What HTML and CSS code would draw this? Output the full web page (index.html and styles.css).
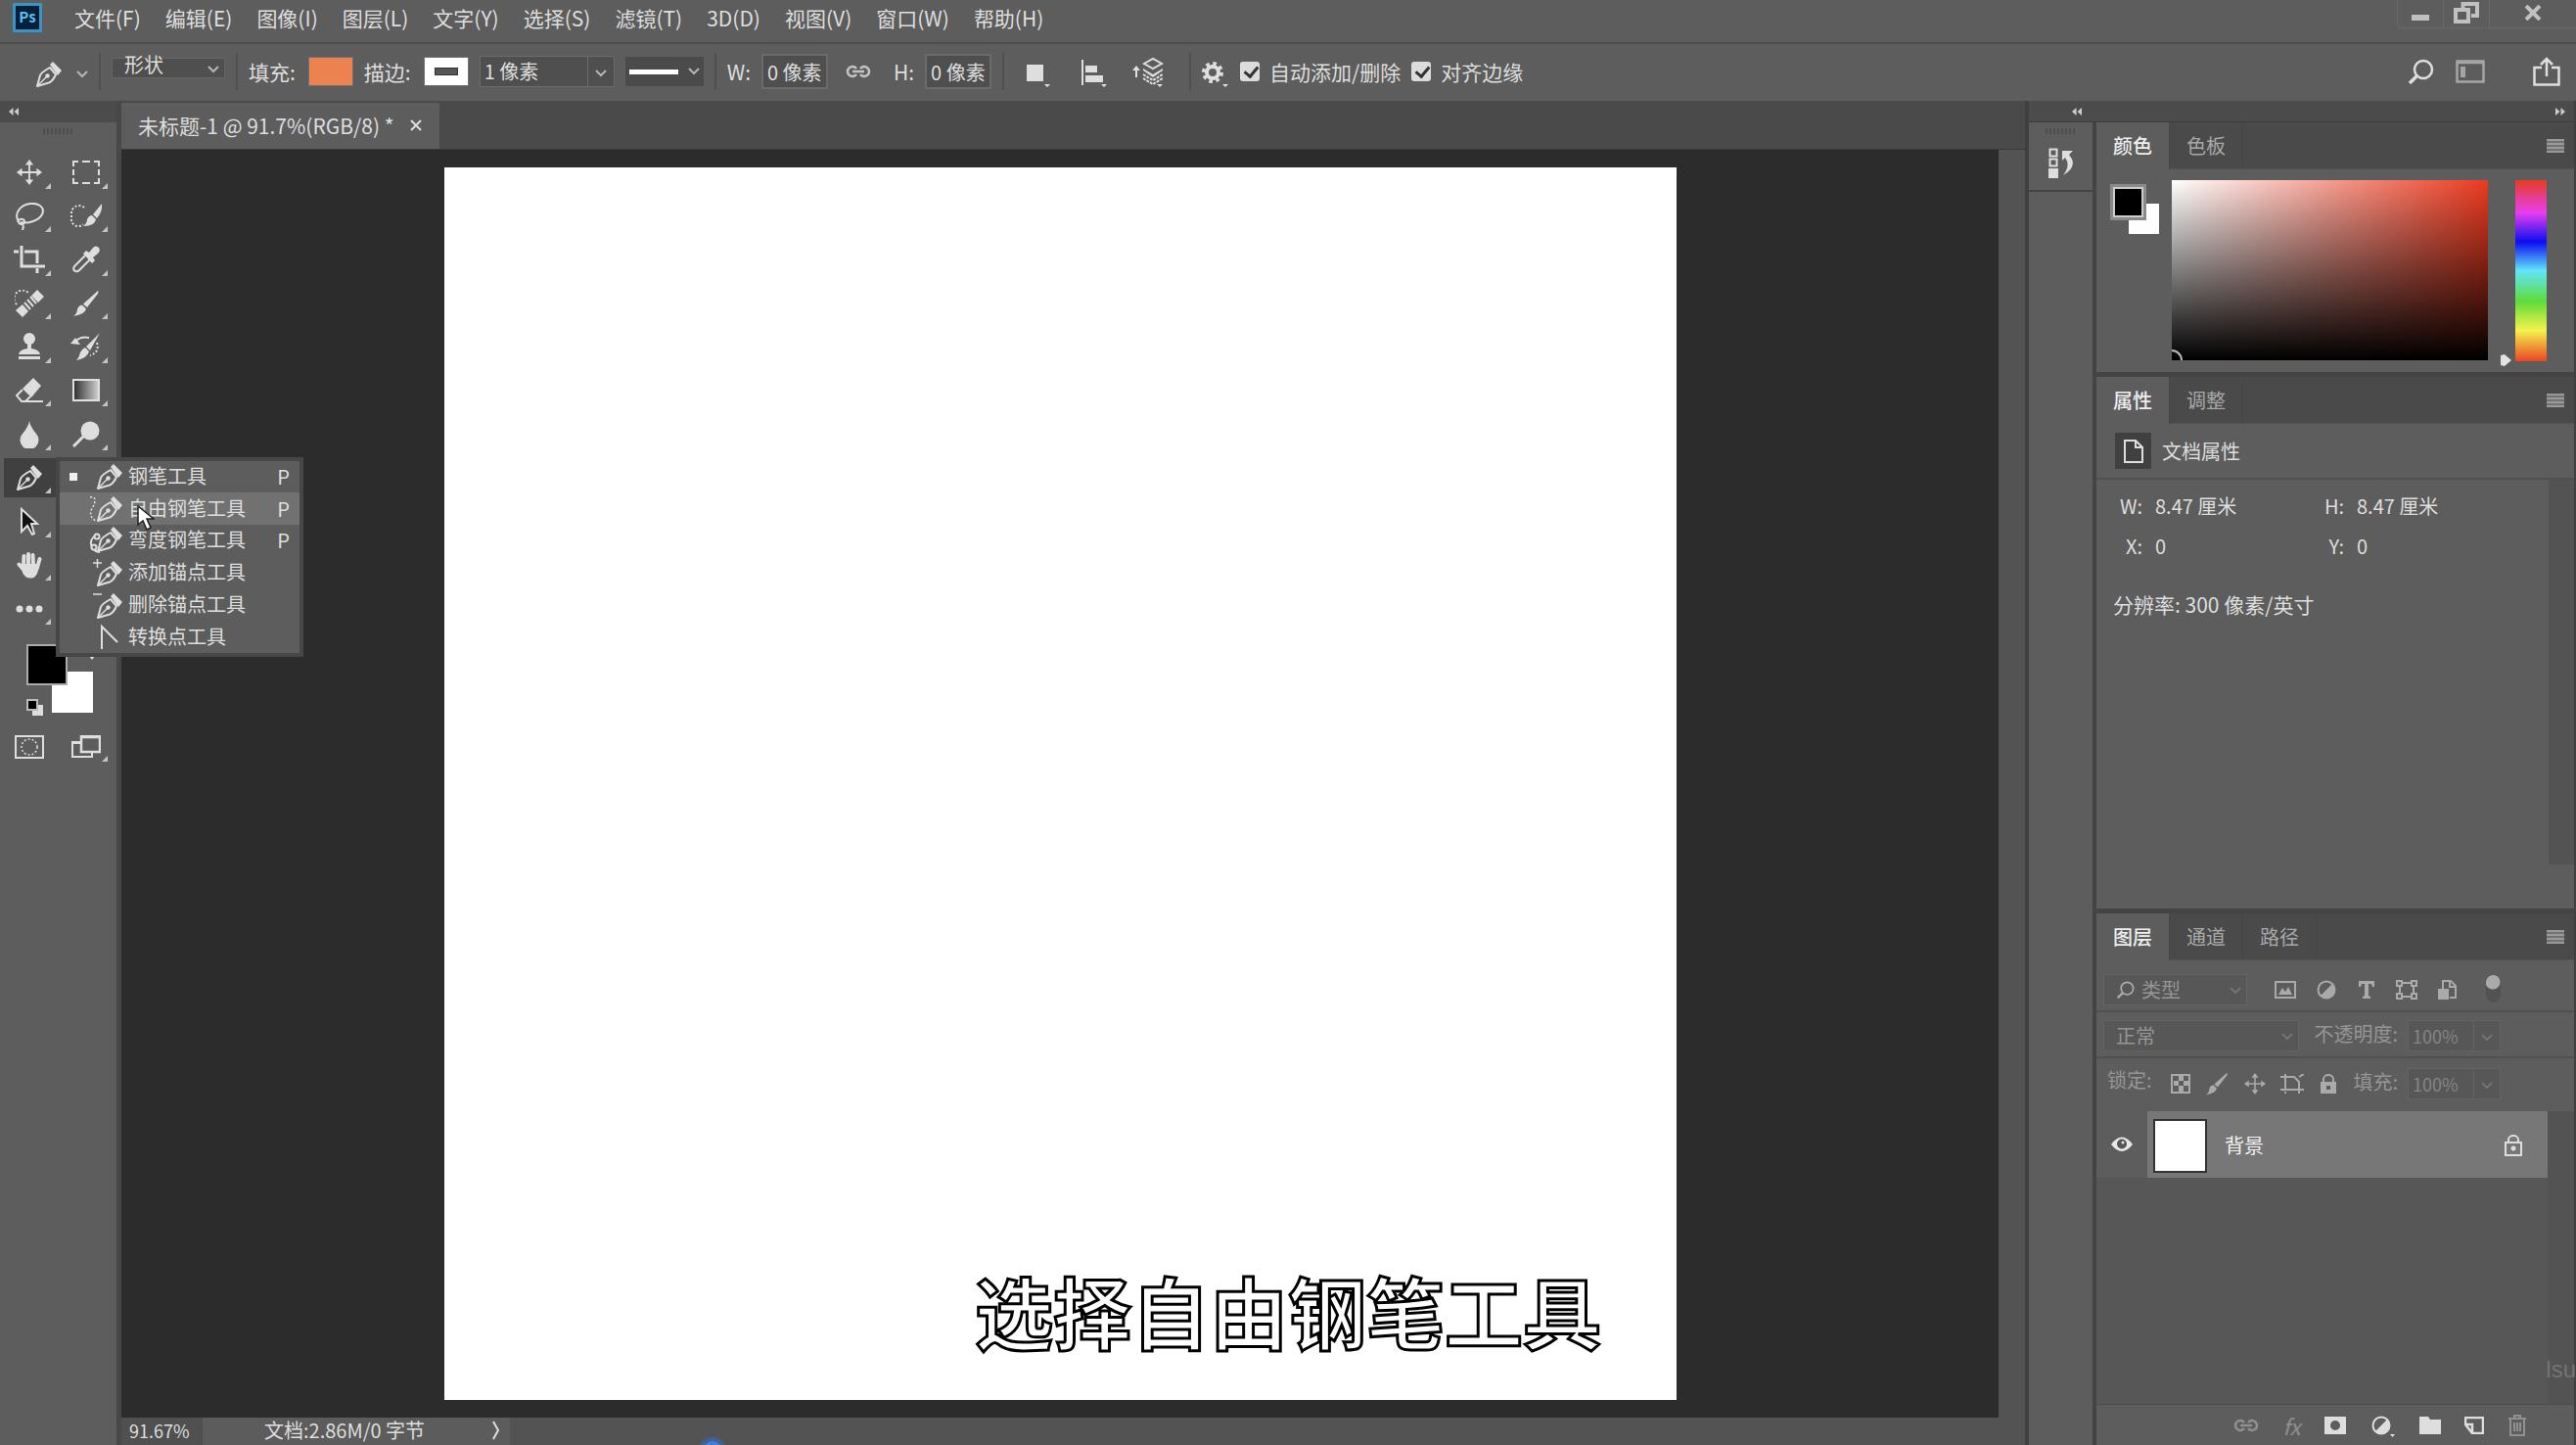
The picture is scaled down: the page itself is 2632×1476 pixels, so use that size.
FILE: index.html
```html
<!DOCTYPE html>
<html lang="zh-CN">

<head>
    <meta charset="UTF-8">
    <meta name="viewport" content="width=device-width, initial-scale=1.0">
    <title>未标题-1</title>
    <link rel="stylesheet" href="styles.css">
</head>

<body>
    <!-- icon sprite -->
    <svg class="sprite" aria-hidden="true">
        <symbol id="pen" viewBox="0 0 26 26">
            <path d="M1 25L4 14Q5 11 14 6L20 13Q17 20 13 21.500Z" fill="none" stroke="currentColor" stroke-width="2" stroke-linejoin="round" />
            <path d="M1 25L11 15" stroke="currentColor" stroke-width="1.500" />
            <circle cx="11.500" cy="14.500" r="2.200" fill="currentColor" />
            <path d="M14 3L17 0L26 9L22 14Z" fill="currentColor" />
        </symbol>
        <symbol id="chevron" viewBox="0 0 12 8">
            <path d="M1 1L6 6L11 1" fill="none" stroke="currentColor" stroke-width="2" />
        </symbol>
        <symbol id="chain" viewBox="0 0 26 14">
            <path d="M11 4A5 5 0 1 0 11 10M15 4A5 5 0 1 1 15 10M7 7H19" fill="none" stroke="currentColor" stroke-width="2.500" />
        </symbol>
        <symbol id="move" viewBox="0 0 28 28">
            <path d="M14 4V24M4 14H24" stroke="currentColor" stroke-width="2" />
            <path d="M14 0L18.500 6H9.500ZM14 28L18.500 22H9.500ZM0 14L6 9.500V18.500ZM28 14L22 9.500V18.500Z" fill="currentColor" />
        </symbol>
        <symbol id="brush" viewBox="0 0 28 28">
            <path d="M26 1Q27 1 26 4L15 18L11 14.500Z" fill="currentColor" />
            <path d="M10 15.500L14 19.500Q13 25 1 27Q5 24 5 20Q6 16 10 15.500Z" fill="currentColor" />
        </symbol>
        <symbol id="search" viewBox="0 0 26 26">
            <circle cx="15" cy="11" r="9" fill="none" stroke="currentColor" stroke-width="2.500" />
            <path d="M9 17L1 25" stroke="currentColor" stroke-width="3.500" />
        </symbol>
        <symbol id="lines" viewBox="0 0 18 14">
            <path d="M0 1H18M0 5H18M0 9H18M0 13H18" stroke="currentColor" stroke-width="3" />
        </symbol>
        <symbol id="half" viewBox="0 0 20 20">
            <circle cx="10" cy="10" r="8.500" fill="none" stroke="currentColor" stroke-width="2" />
            <path d="M16 4A8.500 8.500 0 0 1 4 16Z" fill="currentColor" />
        </symbol>
        <symbol id="collapse" viewBox="0 0 10 8">
            <path d="M4.500 0V8L0 4ZM10 0V8L5.500 4Z" fill="currentColor" />
        </symbol>
    </svg>

    <header class="menubar">
        <svg class="logo" viewBox="0 0 30 30" role="img" aria-label="Ps">
            <rect x="1.500" y="1.500" width="27" height="27" fill="#05203c" stroke="#3b93c0" stroke-width="3" />
            <text x="15" y="20" text-anchor="middle">Ps</text>
        </svg>
        <nav class="menus">
            <button>文件(F)</button>
            <button>编辑(E)</button>
            <button>图像(I)</button>
            <button>图层(L)</button>
            <button>文字(Y)</button>
            <button>选择(S)</button>
            <button>滤镜(T)</button>
            <button>3D(D)</button>
            <button>视图(V)</button>
            <button>窗口(W)</button>
            <button>帮助(H)</button>
        </nav>
        <div class="window-buttons">
            <button aria-label="最小化"><svg width="18" height="20" viewBox="0 0 18 20"><path d="M0 12H18V18H0Z" fill="currentColor" /></svg></button>
            <button aria-label="还原"><svg width="26" height="22" viewBox="0 0 26 22"><path d="M9.500 7V2H24V14H18" fill="none" stroke="currentColor" stroke-width="4" /><path d="M2 8H15V20H2Z" fill="none" stroke="currentColor" stroke-width="4" /></svg></button>
            <button class="close" aria-label="关闭"><svg width="18" height="16" viewBox="0 0 18 16"><path d="M2 1L16 15M16 1L2 15" stroke="currentColor" stroke-width="4" /></svg></button>
        </div>
    </header>

    <div class="options">
        <button class="tool-preset" aria-label="钢笔工具">
            <svg width="26" height="26"><use href="#pen" /></svg>
            <svg width="12" height="8"><use href="#chevron" /></svg>
        </button>
        <span class="sep"></span>
        <span class="select mode">
            <select aria-label="工具模式"><option>形状</option></select>
            <svg width="12" height="8"><use href="#chevron" /></svg>
        </span>
        <span class="sep"></span>
        <label for="fill">填充:</label>
        <button id="fill" class="swatch orange" aria-label="填充"></button>
        <label for="stroke">描边:</label>
        <button id="stroke" class="swatch white" aria-label="描边"><i></i></button>
        <span class="combo">
            <input type="text" value="1 像素" aria-label="描边宽度">
            <button aria-label="描边宽度列表"><svg width="12" height="8"><use href="#chevron" /></svg></button>
        </span>
        <button class="line-type" aria-label="描边类型"><i></i><svg width="12" height="8"><use href="#chevron" /></svg></button>
        <span class="sep"></span>
        <label for="w">W:</label>
        <input class="size" id="w" type="text" value="0 像素">
        <button class="link" aria-label="链接"><svg width="26" height="14"><use href="#chain" /></svg></button>
        <label for="h">H:</label>
        <input class="size" id="h" type="text" value="0 像素">
        <span class="sep"></span>
        <div class="path-buttons">
            <button aria-label="路径操作"><svg width="32" height="32" viewBox="0 0 32 32"><path d="M4 9H21V26H4ZM22 29H28L25 32Z" fill="currentColor" /></svg></button>
            <button aria-label="对齐"><svg width="32" height="32" viewBox="0 0 32 32"><path d="M4 4H6V30H4ZM8 10H20V17H8ZM8 20H26V27H8ZM24 29H30L27 32Z" fill="currentColor" /></svg></button>
            <button aria-label="排列"><svg width="32" height="32" viewBox="0 0 32 32">
                <path d="M0 15L4 10L8 15H5V22H3V15Z" fill="currentColor" />
                <path d="M12 8L21 3L30 8L21 13Z" fill="none" stroke="currentColor" stroke-width="2" />
                <path d="M11 13L21 19L31 13V15L21 22L11 15Z" fill="currentColor" />
                <path d="M11 19L21 25L31 19M11 23L21 29L31 23" fill="none" stroke="currentColor" stroke-width="2" stroke-dasharray="3 1" />
                <path d="M25 29H31L28 32Z" fill="currentColor" />
            </svg></button>
        </div>
        <span class="sep"></span>
        <button class="gear" aria-label="设置"><svg width="28" height="32" viewBox="0 0 28 32">
            <circle cx="11" cy="17" r="6" fill="none" stroke="currentColor" stroke-width="4" />
            <circle cx="11" cy="17" r="9" fill="none" stroke="currentColor" stroke-width="4" stroke-dasharray="3.500 3.570" />
            <path d="M21 29H27L24 32Z" fill="currentColor" />
        </svg></button>
        <label class="check"><input type="checkbox" checked>自动添加/删除</label>
        <label class="check"><input type="checkbox" checked>对齐边缘</label>
        <div class="options-right">
            <button aria-label="搜索"><svg width="26" height="26"><use href="#search" /></svg></button>
            <button class="dim" aria-label="工作区"><svg width="30" height="24" viewBox="0 0 30 24"><path d="M1.500 1.500H28.500V22.500H1.500ZM1 3H29" fill="none" stroke="currentColor" stroke-width="2.500" /><path d="M5 7H10V18H5Z" fill="currentColor" /></svg></button>
            <button aria-label="共享"><svg width="28" height="30" viewBox="0 0 28 30"><path d="M9 11H1.500V28.500H26.500V11H19M14 20V2M8 8L14 2L20 8" fill="none" stroke="currentColor" stroke-width="2.500" /></svg></button>
        </div>
    </div>

    <main class="workspace">
        <aside class="toolbar">
            <div class="strip"><svg width="10" height="8"><use href="#collapse" /></svg></div>
            <div class="grip"></div>
            <div class="tools">
                <button class="tool" aria-label="移动工具"><svg width="26" height="26"><use href="#move" /></svg></button>
                <button class="tool" aria-label="选框工具"><svg width="28" height="24" viewBox="0 0 28 24"><path d="M1 6V1H6M10 1H18M22 1H27V6M27 9V15M27 18V23H22M18 23H10M6 23H1V18M1 15V9" fill="none" stroke="currentColor" stroke-width="2" /></svg></button>
                <button class="tool" aria-label="套索工具"><svg width="30" height="28" viewBox="0 0 30 28"><path d="M4 19C-1 12 5 2 16 1C26 0 31 6 28 12C25 18 14 22 6 20M4 19A3 3 0 1 0 10 19C9 16 4 16 3 20M7 21Q10 23 8 28" fill="none" stroke="currentColor" stroke-width="2" /></svg></button>
                <button class="tool" aria-label="快速选择工具"><svg width="32" height="28" viewBox="0 0 32 28"><path d="M14 5A8 8 0 0 0 1 9V18A7 7 0 0 0 13 22" fill="none" stroke="currentColor" stroke-width="2" stroke-dasharray="2 2" /><path d="M32 1Q33 9 27 16L23 12ZM22 13L26 17Q25 24 13 24Q17 21 17 17Q19 13 22 13Z" fill="currentColor" /></svg></button>
                <button class="tool" aria-label="裁剪工具"><svg width="32" height="28" viewBox="0 0 32 28"><path d="M8 0V21H32M0 6H5M11 6H24V18M24 23V28" fill="none" stroke="currentColor" stroke-width="3" /></svg></button>
                <button class="tool" aria-label="吸管工具"><svg width="28" height="28" viewBox="0 0 28 28"><path d="M13 10L2 21Q0 25 3 26Q5 27 7 25L18 14" fill="none" stroke="currentColor" stroke-width="2" /><path d="M11 8L14 5L17 7L21 2Q24-1 27 2Q29 5 26 8L21 12L23 15L20 18Z" fill="currentColor" /></svg></button>
                <button class="tool" aria-label="修复画笔工具"><svg width="30" height="28" viewBox="0 0 30 28"><path d="M2 15A8 8 0 0 1 14 3" fill="none" stroke="currentColor" stroke-width="2" stroke-dasharray="2 2" /><path d="M23 0L30 7L24 13L17 6ZM8 15L14 22L8 28L1 21Z" fill="currentColor" /><path d="M16 7L22 14M13 10L19 17M10 13L16 20" stroke="currentColor" stroke-width="2" /></svg></button>
                <button class="tool" aria-label="画笔工具"><svg width="28" height="28"><use href="#brush" /></svg></button>
                <button class="tool" aria-label="仿制图章工具"><svg width="24" height="28" viewBox="0 0 24 28"><circle cx="12" cy="6" r="6" fill="currentColor" /><path d="M10 10H14V16Q22 17 23 22H1Q2 17 10 16ZM1 24H23V27H1Z" fill="currentColor" /></svg></button>
                <button class="tool" aria-label="历史记录画笔工具"><svg width="32" height="28" viewBox="0 0 32 28"><path d="M30 0L20 18L16 14ZM15 15L19 19Q17 26 6 28Q9 25 10 20Q12 16 15 15ZM0 11L5 5L10 12Z" fill="currentColor" /><path d="M6 8Q11 3 19 5" fill="none" stroke="currentColor" stroke-width="2" /><path d="M27 10Q30 20 20 23" fill="none" stroke="currentColor" stroke-width="2" stroke-dasharray="2 2" /></svg></button>
                <button class="tool" aria-label="橡皮擦工具"><svg width="28" height="26" viewBox="0 0 28 26"><path d="M18 0L26 8L16 20L7 11Z" fill="currentColor" /><path d="M7 12L1 18L6 24H10L15 19M6 24H28" fill="none" stroke="currentColor" stroke-width="2" /></svg></button>
                <button class="tool" aria-label="渐变工具"><span class="gradient-icon"></span></button>
                <button class="tool" aria-label="模糊工具"><svg width="20" height="28" viewBox="0 0 20 28"><path d="M10 0Q11 6 17 13A9.500 9.500 0 1 1 3 13Q9 6 10 0Z" fill="currentColor" /></svg></button>
                <button class="tool" aria-label="减淡工具"><svg width="28" height="28" viewBox="0 0 28 28"><circle cx="18" cy="10" r="9.500" fill="currentColor" /><path d="M12 15L1 26" stroke="currentColor" stroke-width="3" /></svg></button>
                <div class="tool-slot">
                    <button class="tool active" aria-label="钢笔工具"><svg width="26" height="26"><use href="#pen" /></svg></button>
                    <ul class="flyout">
                        <li><i class="mark"></i><svg width="34" height="28" viewBox="0 0 34 28"><use href="#pen" x="8" y="1" width="26" height="26" /></svg><span>钢笔工具</span><kbd>P</kbd></li>
                        <li class="hover"><i></i><svg width="34" height="28" viewBox="0 0 34 28"><path d="M1 2Q6 1 6 5Q6 9 3 13Q-1 22 7 26" fill="none" stroke="currentColor" stroke-dasharray="2 2" stroke-width="1.500" /><use href="#pen" x="8" y="1" width="26" height="26" /></svg><span>自由钢笔工具</span><kbd>P</kbd></li>
                        <li><i></i><svg width="34" height="28" viewBox="0 0 34 28"><path d="M8 8Q1 12 2 18Q3 25 11 26" fill="none" stroke="currentColor" stroke-width="2" /><circle cx="8" cy="10" r="2.500" fill="#5d5d5d" stroke="currentColor" stroke-width="2" /><circle cx="5" cy="21" r="2.500" fill="#5d5d5d" stroke="currentColor" stroke-width="2" /><use href="#pen" x="8" y="0" width="26" height="26" /></svg><span>弯度钢笔工具</span><kbd>P</kbd></li>
                        <li><i></i><svg width="34" height="28" viewBox="0 0 34 28"><path d="M4 4H13M8.500 0V9" stroke="currentColor" stroke-width="1.500" /><use href="#pen" x="8" y="2" width="26" height="26" /></svg><span>添加锚点工具</span><kbd></kbd></li>
                        <li><i></i><svg width="34" height="28" viewBox="0 0 34 28"><path d="M4 3H13" stroke="currentColor" stroke-width="1.500" /><use href="#pen" x="8" y="2" width="26" height="26" /></svg><span>删除锚点工具</span><kbd></kbd></li>
                        <li><i></i><svg width="34" height="28" viewBox="0 0 34 28"><path d="M13 26V3L29 19" fill="none" stroke="currentColor" stroke-width="2" /></svg><span>转换点工具</span><kbd></kbd></li>
                    </ul>
                    <svg class="pointer" width="18" height="26" viewBox="0 0 18 26"><path d="M1 1V20L6 16L10 25L14 23L10 14H17Z" fill="#fff" stroke="#222" stroke-width="1.500" /></svg>
                </div>
                <button class="tool" aria-label="路径选择工具"><svg width="20" height="30" viewBox="0 0 20 30"><path d="M2 2V25L8 19L13 28L15 27L12 17H18Z" fill="#111" stroke="currentColor" stroke-width="2" /></svg></button>
                <button class="tool" aria-label="抓手工具"><svg width="26" height="28" viewBox="0 0 26 28"><path d="M7 15L7.500 5M12 14V3M17 14L16.500 4M23.500 8L21 17M2.500 13.500L8 20" stroke="currentColor" stroke-width="4" stroke-linecap="round" /><path d="M5 13H23Q22 27 15 27.500Q9 28 6 22Z" fill="currentColor" /></svg></button>
                <button class="tool" aria-label="编辑工具栏"><svg width="28" height="8" viewBox="0 0 28 8"><circle cx="4" cy="4" r="3.500" fill="currentColor" /><circle cx="14" cy="4" r="3.500" fill="currentColor" /><circle cx="24" cy="4" r="3.500" fill="currentColor" /></svg></button>
            </div>
            <div class="color-chips">
                <span class="chip back"></span>
                <span class="chip front"></span>
                <svg class="defaults" width="18" height="18" viewBox="0 0 18 18"><path d="M6 6H17V17H6Z" fill="#ddd" /><path d="M1 1H11V11H1Z" fill="#000" stroke="#bbb" stroke-width="2" /></svg>
                <svg class="swap" width="14" height="14" viewBox="0 0 14 14"><path d="M2 3Q10 2 11 10" fill="none" stroke="currentColor" stroke-width="2" /><path d="M8 9H14L11 13Z" fill="currentColor" /></svg>
            </div>
            <div class="screen-modes">
                <button aria-label="快速蒙版"><svg width="30" height="24" viewBox="0 0 30 24"><path d="M1 1H29V23H1Z" fill="none" stroke="currentColor" stroke-width="2" /><circle cx="15" cy="12" r="8" fill="none" stroke="currentColor" stroke-width="1.500" stroke-dasharray="2 2" /></svg></button>
                <button class="has-more" aria-label="屏幕模式"><svg width="30" height="24" viewBox="0 0 30 24"><path d="M9 7H1V22H21V17M1 8H9" fill="none" stroke="currentColor" stroke-width="2" /><path d="M10 1H29V17H10ZM10 2H29" fill="none" stroke="currentColor" stroke-width="2.500" /></svg></button>
            </div>
        </aside>

        <section class="document">
            <div class="doc-tabs">
                <div class="doc-tab">
                    <span>未标题-1 @ 91.7%(RGB/8) *</span>
                    <button aria-label="关闭文档"><svg width="12" height="12" viewBox="0 0 12 12"><path d="M1 1L11 11M11 1L1 11" stroke="currentColor" stroke-width="2" /></svg></button>
                </div>
            </div>
            <div class="stage">
                <div class="pasteboard">
                    <div class="canvas"></div>
                </div>
                <div class="scrollbar"></div>
            </div>
            <footer class="status">
                <input type="text" value="91.67%" aria-label="缩放">
                <div class="doc-info"><span>文档:2.86M/0 字节</span><svg width="8" height="20" viewBox="0 0 8 20"><path d="M1 1L6 10L1 19" fill="none" stroke="currentColor" stroke-width="2" /></svg></div>
            </footer>
        </section>

        <aside class="right">
            <div class="strip">
                <svg width="10" height="8"><use href="#collapse" /></svg>
                <svg class="flip" width="10" height="8"><use href="#collapse" /></svg>
            </div>
            <div class="right-body">
                <div class="dock">
                    <div class="dock-group">
                        <div class="grip"></div>
                        <button aria-label="历史记录"><svg width="26" height="32" viewBox="0 0 26 32"><path d="M1.500 2.500H8.500V9.500H1.500ZM1.500 12.500H8.500V19.500H1.500Z" fill="none" stroke="currentColor" stroke-width="2" /><path d="M0 22H10V32H0ZM14 4H25L21 8Q31 20 15 29Q23 19 17 11L14 14Z" fill="currentColor" /></svg></button>
                    </div>
                </div>
                <div class="panels">
                    <section class="panel">
                        <div class="tabs">
                            <button class="on">颜色</button>
                            <button>色板</button>
                            <svg width="18" height="14"><use href="#lines" /></svg>
                        </div>
                        <div class="color-body">
                            <div class="mini-chips"><span class="mini-back"></span><span class="mini-front"></span></div>
                            <div class="picker"><span></span></div>
                            <svg class="hue-arrow" width="11" height="12" viewBox="0 0 11 12"><path d="M0 1L4 0L11 6L4 12L0 11Z" fill="#e4e4e4" /></svg>
                            <div class="hue"></div>
                        </div>
                    </section>
                    <section class="panel grow">
                        <div class="tabs">
                            <button class="on">属性</button>
                            <button>调整</button>
                            <svg width="18" height="14"><use href="#lines" /></svg>
                        </div>
                        <div class="prop-title">
                            <span class="doc-icon"><svg width="20" height="24" viewBox="0 0 20 24"><path d="M1 1H12L19 8V23H1ZM12 1V8H19" fill="none" stroke="currentColor" stroke-width="2" /></svg></span>
                            文档属性
                        </div>
                        <div class="prop-body">
                            <dl>
                                <dt>W:</dt><dd>8.47 厘米</dd>
                                <dt>H:</dt><dd>8.47 厘米</dd>
                                <dt>X:</dt><dd>0</dd>
                                <dt>Y:</dt><dd>0</dd>
                            </dl>
                            <p>分辨率: 300 像素/英寸</p>
                            <div class="prop-scroll"></div>
                        </div>
                    </section>
                    <section class="panel grow">
                        <div class="tabs">
                            <button class="on">图层</button>
                            <button>通道</button>
                            <button>路径</button>
                            <svg width="18" height="14"><use href="#lines" /></svg>
                        </div>
                        <div class="layer-row filter">
                            <span class="select kind">
                                <svg class="lens" width="18" height="18"><use href="#search" /></svg>
                                <select aria-label="图层过滤"><option>类型</option></select>
                                <svg width="12" height="8"><use href="#chevron" /></svg>
                            </span>
                            <div class="icons">
                                <button aria-label="像素图层"><svg width="22" height="20" viewBox="0 0 22 20"><path d="M1 2H21V18H1Z" fill="none" stroke="currentColor" stroke-width="2" /><path d="M4 15L8 8L11 12L14 7L18 15Z" fill="currentColor" /></svg></button>
                                <button aria-label="调整图层"><svg width="20" height="20"><use href="#half" /></svg></button>
                                <button aria-label="文字图层"><svg width="18" height="18" viewBox="0 0 18 18"><path d="M1 0H17V6H15L14 3H11V15L13 16V18H5V16L7 15V3H4L3 6H1Z" fill="currentColor" /></svg></button>
                                <button aria-label="形状图层"><svg width="22" height="20" viewBox="0 0 22 20"><path d="M4 3H18V17H4Z" fill="none" stroke="currentColor" stroke-width="2" /><path d="M1 1H6V6H1ZM16 1H21V6H16ZM1 14H6V19H1ZM16 14H21V19H16Z" fill="#5d5d5d" stroke="currentColor" stroke-width="2" /></svg></button>
                                <button aria-label="智能对象"><svg width="20" height="20" viewBox="0 0 20 20"><path d="M5 9V1H13L18 6V18H12M12 1V7H18" fill="none" stroke="currentColor" stroke-width="2" /><path d="M0 9H11V20H0Z" fill="currentColor" /></svg></button>
                            </div>
                            <button class="toggle" aria-label="打开图层过滤"></button>
                        </div>
                        <div class="layer-row">
                            <span class="select blend">
                                <select aria-label="混合模式"><option>正常</option></select>
                                <svg width="12" height="8"><use href="#chevron" /></svg>
                            </span>
                            <label for="opacity">不透明度:</label>
                            <span class="combo small">
                                <input id="opacity" type="text" value="100%">
                                <button aria-label="不透明度滑块"><svg width="12" height="8"><use href="#chevron" /></svg></button>
                            </span>
                        </div>
                        <div class="layer-row locks">
                            <span class="lock-label">锁定:</span>
                            <div class="icons">
                                <button aria-label="锁定透明像素"><svg width="20" height="20" viewBox="0 0 20 20"><path d="M1 1H19V19H1Z" fill="none" stroke="currentColor" stroke-width="2" /><path d="M8 2H13V7H8ZM3 7H8V12H3ZM13 7H18V12H13ZM8 12H13V18H8Z" fill="currentColor" /></svg></button>
                                <button aria-label="锁定图像像素"><svg width="24" height="24"><use href="#brush" /></svg></button>
                                <button aria-label="锁定位置"><svg width="22" height="22"><use href="#move" /></svg></button>
                                <button aria-label="防止嵌套"><svg width="24" height="20" viewBox="0 0 24 20"><path d="M5 0V15M0 3H14L19 8V20M0 16H24M5 18V20M19 3L24 0" fill="none" stroke="currentColor" stroke-width="2" /></svg></button>
                                <button aria-label="锁定全部"><svg width="18" height="20" viewBox="0 0 18 20"><path d="M4 9V5A5 4 0 0 1 14 5V9" fill="none" stroke="currentColor" stroke-width="2" /><path d="M1 8H17V20H1ZM7 12V16H11V12Z" fill="currentColor" fill-rule="evenodd" /></svg></button>
                            </div>
                            <label for="layer-fill">填充:</label>
                            <span class="combo small">
                                <input id="layer-fill" type="text" value="100%">
                                <button aria-label="填充滑块"><svg width="12" height="8"><use href="#chevron" /></svg></button>
                            </span>
                        </div>
                        <div class="layer-list">
                            <div class="layers">
                                <div class="layer">
                                    <button class="eye" aria-label="可见性"><svg width="22" height="16" viewBox="0 0 22 16"><path d="M0 8Q11-7 22 8Q11 22 0 8Z" fill="currentColor" /><circle cx="11" cy="7.500" r="5" fill="#555" /><circle cx="12" cy="6" r="1.500" fill="currentColor" /></svg></button>
                                    <div class="layer-main">
                                        <span class="thumb"></span>
                                        <span class="name">背景</span>
                                        <svg width="20" height="22" viewBox="0 0 20 22"><path d="M5 8V5A5 4 0 0 1 15 5V8M2 8H18V21H2Z" fill="none" stroke="currentColor" stroke-width="2" /><circle cx="10" cy="14" r="2.500" fill="currentColor" /></svg>
                                    </div>
                                </div>
                            </div>
                            <div class="layer-scroll"></div>
                        </div>
                        <div class="layer-footer">
                            <button class="off" aria-label="链接图层"><svg width="26" height="14"><use href="#chain" /></svg></button>
                            <button class="off fx">fx</button>
                            <button aria-label="添加蒙版"><svg width="22" height="18" viewBox="0 0 22 18"><path d="M0 0H22V18H0ZM11 4A5 5 0 1 0 11 14A5 5 0 1 0 11 4Z" fill="currentColor" fill-rule="evenodd" /></svg></button>
                            <button aria-label="新建调整图层"><svg width="26" height="24" viewBox="0 0 26 24"><use href="#half" x="2" y="2" width="20" height="20" /><path d="M21 21H26L23.500 24Z" fill="currentColor" /></svg></button>
                            <button aria-label="新建组"><svg width="22" height="18" viewBox="0 0 22 18"><path d="M0 0H9L11 3H22V18H0Z" fill="currentColor" /></svg></button>
                            <button aria-label="新建图层"><svg width="20" height="18" viewBox="0 0 20 18"><path d="M1 8V1H19V17H8ZM1 8H8V17" fill="none" stroke="currentColor" stroke-width="2.500" /></svg></button>
                            <button class="off" aria-label="删除图层"><svg width="18" height="22" viewBox="0 0 18 22"><path d="M0 4H18M6 4V1H12V4M2 4V21H16V4M6 8V17M9 8V17M12 8V17" fill="none" stroke="currentColor" stroke-width="2" /></svg></button>
                        </div>
                    </section>
                </div>
            </div>
        </aside>
    </main>

    <!-- video overlays -->
    <p class="caption">选择自由钢笔工具</p>
    <span class="watermark">lsu</span>
    <span class="seek-dot"></span>
</body>

</html>
```
FILE: styles.css
```css
* {
    box-sizing: border-box;
}

body {
    margin: 0;
    height: 100vh;
    display: flex;
    flex-direction: column;
    position: relative;
    overflow: hidden;
    background-color: #5d5d5d;
    color: #dedede;
    font-family: 'Noto Sans CJK SC', sans-serif;
    font-size: 20px;
    line-height: 24px;
}

button,
input,
select {
    margin: 0;
    padding: 0;
    border: 0;
    background: none;
    color: inherit;
    font: inherit;
    appearance: none;
}

button {
    display: flex;
    align-items: center;
    justify-content: center;
}

svg {
    display: block;
    flex: none;
}

.sprite {
    position: absolute;
    width: 0;
    height: 0;
}

/* menu bar */
.menubar {
    display: flex;
    flex: none;
    height: 45px;
    padding-left: 13px;
    border-bottom: 2px solid #4e4e4e;
}

.logo {
    width: 30px;
    height: 30px;
    margin-top: 3px;
}

.logo text {
    fill: #5cc0ee;
    font-size: 15px;
    font-weight: bold;
}

.menus {
    display: flex;
    gap: 25px;
    margin-left: 33px;
    height: 36px;
    font-size: 21px;
}

.window-buttons {
    display: flex;
    height: 29px;
    margin-left: auto;
    color: #c0c0c0;
    border-left: 1px solid #6a6a6a;
    border-bottom: 1px solid #6a6a6a;
    border-bottom-left-radius: 4px;
}

.window-buttons button {
    width: 47px;
    padding-bottom: 2px;
    border-right: 1px solid #6a6a6a;
}

.window-buttons .close {
    width: 88px;
    border: 0;
}

/* options bar */
.options {
    display: flex;
    flex: none;
    align-items: center;
    gap: 11px;
    height: 58px;
    padding: 0 16px 2px 37px;
}

.options label {
    font-size: 21px;
}

.sep {
    width: 2px;
    height: 38px;
    background-color: #505050;
}

.tool-preset {
    gap: 15px;
    padding-top: 5px;
}

.tool-preset svg + svg {
    color: #b5b5b5;
}

.select {
    position: relative;
    display: flex;
    background-color: #4f4f4f;
    border: 1px solid #666;
}

.select select {
    width: 100%;
    padding-left: 12px;
}

.select svg:last-child {
    position: absolute;
    right: 5px;
    top: 50%;
    margin-top: -3px;
    color: #b5b5b5;
    pointer-events: none;
}

.mode {
    width: 116px;
    height: 21px;
    align-self: flex-start;
    margin-top: 14px;
}

.mode select {
    height: 24px;
    margin-top: -6px;
}

.swatch {
    width: 46px;
    height: 30px;
    margin-left: 2px;
    border: 1px solid #707070;
}

.swatch.orange {
    background-color: #ec8250;
}

.swatch.white {
    background-color: #fff;
}

.swatch i {
    width: 24px;
    height: 8px;
    background-color: #555;
    border: 1px solid #333;
}

.combo {
    display: flex;
    width: 138px;
    height: 32px;
    border: 1px solid #6b6b6b;
    background-color: #4f4f4f;
}

.combo input {
    flex: 1;
    min-width: 0;
    padding-left: 4px;
}

.combo button {
    width: 27px;
    padding-top: 4px;
    border-left: 1px solid #6b6b6b;
    color: #b5b5b5;
}

.line-type {
    width: 80px;
    height: 30px;
    gap: 10px;
    background-color: #4b4b4b;
    color: #b5b5b5;
}

.line-type i {
    width: 50px;
    height: 5px;
    background-color: #fff;
}

.size {
    width: 68px;
    height: 36px;
    padding-left: 4px;
    border: 2px solid #6b6b6b;
    background-color: #4f4f4f;
}

.link {
    margin: 0 12px 0 7px;
    color: #c4c4c4;
}

.path-buttons {
    display: flex;
    gap: 24px;
    margin: 0 15px 0 8px;
}

.check {
    display: flex;
    align-items: center;
    gap: 10px;
}

.check input {
    width: 20px;
    height: 20px;
    border-radius: 3px;
    background-color: #dcdcdc;
}

.check input:checked::before {
    content: '';
    display: block;
    width: 6px;
    height: 11px;
    margin: 2px 0 0 7px;
    border: solid #333;
    border-width: 0 3px 3px 0;
    rotate: 40deg;
}

.options-right {
    display: flex;
    align-items: center;
    margin-left: auto;
    gap: 22px;
}

.options-right .dim {
    margin-right: 27px;
    color: #a5a5a5;
}

/* workspace */
.workspace {
    display: flex;
    flex: 1;
    min-height: 0;
}

.strip {
    display: flex;
    flex: none;
    align-items: center;
    height: 22px;
    background-color: #4b4b4b;
    color: #ccc;
}

.grip {
    width: 32px;
    height: 6px;
    margin: 6px auto 0;
    background: repeating-linear-gradient(to right, #4e4e4e 0 2px, transparent 2px 4px);
}

.toolbar {
    width: 124px;
    flex: none;
    border-right: 5px solid #484848;
}

.toolbar .strip {
    padding-left: 9px;
}

.tools {
    display: grid;
    grid-template-columns: 58px 58px;
    grid-template-rows: repeat(11, 1fr);
    height: 490px;
    margin-top: 17px;
    padding-left: 1px;
}

.tool,
.has-more {
    position: relative;
}

.tool {
    width: 58px;
    height: 100%;
}

.tool::after,
.has-more::after {
    content: '';
    position: absolute;
    right: 7px;
    bottom: 6px;
    border: 3px solid transparent;
    border-right-color: #c4c4c4;
    border-bottom-color: #c4c4c4;
}

.tool-slot {
    position: relative;
}

.tool.active {
    background: linear-gradient(#404040, #404040) 3px 2px / 53px 40px no-repeat;
}

.tool-slot,
.tool-slot ~ .tool {
    grid-column: 1;
}

.gradient-icon {
    width: 28px;
    height: 23px;
    border: 2px solid #e0e0e0;
    background: linear-gradient(to right, #333, #ccc);
}

.flyout {
    display: flex;
    flex-direction: column;
    position: absolute;
    z-index: 2;
    left: 56px;
    top: 1px;
    width: 253px;
    height: 204px;
    margin: 0;
    padding: 0;
    list-style: none;
    border: 4px solid #474747;
    background-color: #5d5d5d;
}

.flyout li {
    display: flex;
    flex: 1;
    align-items: center;
}

.flyout li.hover {
    background-color: #717171;
}

.flyout i {
    width: 8px;
    height: 8px;
    margin: 0 12px 0 10px;
}

.flyout .mark {
    background-color: #eee;
}

.flyout span {
    margin: -2px 0 0 6px;
}

.flyout kbd {
    margin-left: auto;
    padding-right: 10px;
    font: inherit;
}

.pointer {
    position: absolute;
    z-index: 3;
    left: 139px;
    top: 50px;
}

.color-chips {
    position: relative;
    height: 80px;
    margin: 14px 0 0 27px;
}

.chip {
    position: absolute;
    width: 42px;
    height: 42px;
    border: 2px solid #aaa;
}

.chip.front {
    left: 0;
    top: 0;
    background-color: #000;
}

.chip.back {
    left: 26px;
    top: 28px;
    background-color: #fff;
    border-color: #fff;
}

.defaults {
    position: absolute;
    left: 0;
    top: 56px;
}

.swap {
    position: absolute;
    left: 56px;
    top: 3px;
}

.screen-modes {
    display: flex;
    margin-top: 12px;
    padding-left: 1px;
}

.screen-modes button {
    width: 58px;
    height: 26px;
}

.screen-modes .has-more::after {
    bottom: -2px;
}

/* document */
.document {
    display: flex;
    flex: 1;
    flex-direction: column;
    min-width: 0;
}

.doc-tabs {
    display: flex;
    height: 50px;
    flex: none;
    padding-top: 2px;
    background-color: #4a4a4a;
    border-bottom: 1px solid #3a3a3a;
}

.doc-tab {
    display: flex;
    align-items: center;
    gap: 16px;
    padding: 0 18px 2px 17px;
    background-color: #5d5d5d;
    font-size: 21px;
}

.stage {
    display: flex;
    flex: 1;
    min-height: 0;
}

.pasteboard {
    display: flex;
    flex: 1;
    justify-content: center;
    padding: 18px 0;
    background-color: #2c2c2c;
}

.canvas {
    height: 100%;
    aspect-ratio: 1;
    background-color: #fff;
}

.scrollbar {
    width: 27px;
    background-color: #535353;
}

.status {
    display: flex;
    flex: none;
    height: 28px;
    background-color: #535353;
}

.status input {
    width: 83px;
    padding: 0 0 2px 8px;
    background-color: #505050;
    font-size: 18px;
}

.doc-info {
    display: flex;
    align-items: center;
    justify-content: space-between;
    width: 314px;
    padding: 0 10px 2px 63px;
    background-color: #5c5c5c;
}

/* right side */
.right {
    display: flex;
    flex-direction: column;
    flex: none;
    width: 563px;
    border-left: 4px solid #404040;
    border-right: 2px solid #404040;
}

.right .strip {
    justify-content: space-between;
    padding: 0 9px 0 44px;
    border-bottom: 1px solid #3c3c3c;
}

.flip {
    rotate: 180deg;
}

.right-body {
    display: flex;
    flex: 1;
    min-height: 0;
}

.dock {
    width: 69px;
    border-right: 4px solid #444;
}

.dock-group {
    height: 71px;
    border-bottom: 2px solid #444;
    overflow: hidden;
}

.dock-group button {
    margin: 13px auto 0;
}

.panels {
    display: flex;
    flex: 1;
    flex-direction: column;
    gap: 5px;
    background-color: #444;
}

.panel {
    display: flex;
    flex-direction: column;
    background-color: #5d5d5d;
}

.panel.grow {
    flex: 1;
}

.tabs {
    display: flex;
    align-items: center;
    flex: none;
    height: 48px;
    background-color: #4a4a4a;
    border-bottom: 1px solid #545454;
}

.tabs button {
    width: 75px;
    height: 48px;
    border-right: 1px solid #454545;
    color: #a8a8a8;
}

.tabs .on {
    background-color: #5d5d5d;
    color: #eee;
    font-weight: 500;
}

.tabs svg {
    margin: 0 10px 0 auto;
    color: #999;
}

.color-body {
    display: flex;
    height: 207px;
    padding: 11px 0 0 14px;
}

.mini-chips {
    position: relative;
    width: 63px;
}

.mini-front,
.mini-back {
    position: absolute;
    width: 31px;
    height: 31px;
}

.mini-front {
    left: 3px;
    top: 7px;
    background-color: #000;
    border: 2px solid #ccc;
    outline: 3px solid #8a8a8a;
}

.mini-back {
    left: 19px;
    top: 24px;
    background-color: #fff;
}

.picker {
    width: 323px;
    height: 184px;
    overflow: hidden;
    background: linear-gradient(to top, #000, transparent), linear-gradient(to right, #fff, #ec3a20);
}

.picker span {
    display: block;
    width: 22px;
    height: 22px;
    margin: 173px 0 0 -11px;
    border: 2px solid #bbb;
    border-radius: 50%;
}

.hue-arrow {
    margin: 178px 4px 0 13px;
}

.hue {
    width: 32px;
    height: 185px;
    background: linear-gradient(#e63c22, #e83ef0 18%, #0d0df2 34%, #62e4fa 50%, #5fdc3a 67%, #f5f24c 83%, #ea4424);
}

.prop-title {
    display: flex;
    align-items: center;
    gap: 11px;
    height: 57px;
    padding-left: 19px;
    border-bottom: 2px solid #505050;
}

.doc-icon {
    display: flex;
    align-items: center;
    justify-content: center;
    width: 37px;
    height: 37px;
    background-color: #404040;
}

.prop-body {
    position: relative;
    flex: 1;
    padding: 15px 17px;
}

.prop-body dl {
    display: grid;
    grid-template-columns: 30px 148px 32px 1fr;
    column-gap: 13px;
    row-gap: 17px;
    margin: 0 0 35px;
}

.prop-body dt {
    text-align: right;
}

.prop-body dd,
.prop-body p {
    margin: 0;
}

.prop-body p {
    font-size: 21px;
}

.prop-scroll {
    position: absolute;
    right: 0;
    top: 0;
    bottom: 45px;
    width: 26px;
    background-color: #535353;
}

/* layers */
.layer-row {
    display: flex;
    align-items: center;
    height: 47px;
    padding: 2px 75px 0 7px;
    border-bottom: 2px solid #505050;
    color: #959595;
}

.layer-row .select,
.layer-row .combo {
    height: 32px;
    background-color: #575757;
    border-color: #646464;
}

.layer-row .select svg:last-child,
.layer-row .combo button {
    color: #747474;
    border-color: #646464;
}

.layer-row label {
    margin: -4px 10px 0 auto;
}

.filter {
    height: 53px;
    padding-top: 9px;
}

.kind {
    align-items: center;
    width: 147px;
}

.lens {
    margin-left: 13px;
    color: #aaa;
}

.kind select {
    padding-left: 7px;
    height: 30px;
}

.blend {
    width: 200px;
}

.icons {
    display: flex;
    align-items: center;
    justify-content: space-between;
    color: #aaa;
}

.filter .icons {
    width: 187px;
    margin-left: 28px;
}

.toggle {
    width: 15px;
    height: 28px;
    margin: -3px 0 0 auto;
    border-radius: 8px;
    background: radial-gradient(circle at 7px 7px, #aaa 7px, #525252 8px);
}

.locks {
    height: 54px;
    padding: 0 75px 2px 11px;
    border: 0;
}

.lock-label {
    margin-top: -8px;
}

.locks .icons {
    width: 170px;
    margin-left: 19px;
}

.combo.small {
    width: 95px;
    color: #858585;
    font-size: 18px;
}

.layer-list {
    display: flex;
    flex: 1;
    background-color: #575757;
}

.layers {
    flex: 1;
}

.layer {
    display: flex;
    height: 68px;
    background-color: #5d5d5d;
}

.eye {
    width: 52px;
    color: #e8e8e8;
}

.layer-main {
    display: flex;
    flex: 1;
    align-items: center;
    padding: 2px 25px 0 6px;
    background-color: #777;
}

.thumb {
    width: 55px;
    height: 55px;
    border: 2px solid #333;
    background-color: #fff;
}

.name {
    margin: 0 auto 0 18px;
    color: #f2f2f2;
}

.layer-scroll {
    width: 27px;
    background-color: #535353;
}

.layer-footer {
    display: flex;
    align-items: center;
    justify-content: space-between;
    height: 42px;
    padding: 0 49px 0 140px;
    border-top: 1px solid #4c4c4c;
}

.layer-footer .off {
    color: #909090;
}

.fx {
    font-style: italic;
    font-size: 22px;
}

/* overlays */
.caption {
    position: absolute;
    left: 0;
    right: 0;
    bottom: 97px;
    z-index: 4;
    margin: 0;
    text-align: center;
    font-size: 80px;
    line-height: 84px;
    font-weight: bold;
    color: #fff;
    -webkit-text-stroke: 3px #000;
}

.watermark {
    position: absolute;
    right: 0;
    bottom: 65px;
    color: #747474;
    font-family: 'Liberation Sans', sans-serif;
    font-size: 24px;
}

.seek-dot {
    position: absolute;
    left: 714px;
    bottom: -20px;
    width: 28px;
    height: 28px;
    border: 4px solid #43618e;
    border-radius: 50%;
    background-color: #3c7ee0;
}
```
